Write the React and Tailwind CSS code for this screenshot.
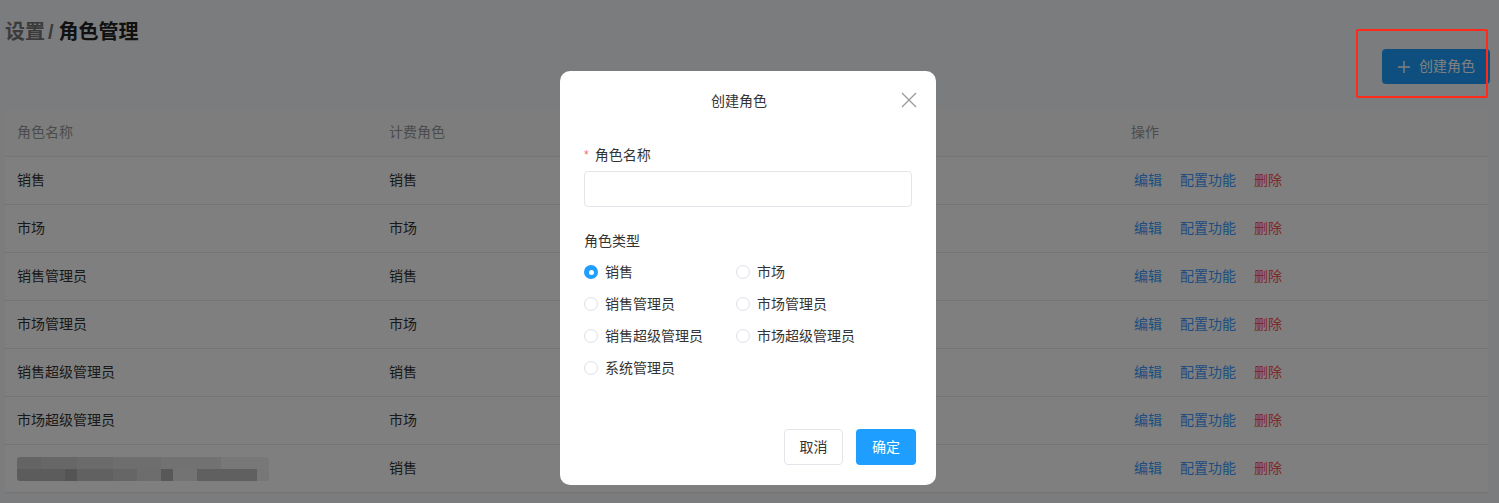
import React from 'react';

const rows = [
  { name: '销售', billing: '销售' },
  { name: '市场', billing: '市场' },
  { name: '销售管理员', billing: '销售' },
  { name: '市场管理员', billing: '市场' },
  { name: '销售超级管理员', billing: '销售' },
  { name: '市场超级管理员', billing: '市场' },
  { name: null, billing: '销售' },
];

const roleTypes = [
  ['销售', '市场'],
  ['销售管理员', '市场管理员'],
  ['销售超级管理员', '市场超级管理员'],
  ['系统管理员'],
];

// pixelated name, as it is blurred in the screenshot
const Mosaic = () => (
  <div className="flex flex-col w-[252px] h-[24px] rounded-[3px] overflow-hidden">
    <div className="flex h-[12px]">
      <div className="w-[24px] bg-[#c9c9c9]" />
      <div className="w-[36px] bg-[#cfcfcf]" />
      <div className="w-[36px] bg-[#d6d6d6]" />
      <div className="w-[48px] bg-[#dddddd]" />
      <div className="w-[60px] bg-[#e4e4e4]" />
      <div className="w-[48px] bg-[#f0f0f0]" />
    </div>
    <div className="flex h-[12px]">
      <div className="w-[48px] bg-[#b9b9b9]" />
      <div className="w-[12px] bg-[#a9a9a9]" />
      <div className="w-[36px] bg-[#c2c2c2]" />
      <div className="w-[24px] bg-[#cdcdcd]" />
      <div className="w-[24px] bg-[#dadada]" />
      <div className="w-[12px] bg-[#b0b0b0]" />
      <div className="w-[24px] bg-[#e6e6e6]" />
      <div className="w-[60px] bg-[#c0c0c0]" />
      <div className="w-[12px] bg-[#eeeeee]" />
    </div>
  </div>
);

const Radio = ({ checked, label }) => (
  <div className="flex items-center w-[152px] h-[32px]">
    {checked ? (
      <span className="w-[14px] h-[14px] rounded-full bg-[#1e9fff] flex items-center justify-center">
        <span className="w-[5px] h-[5px] rounded-full bg-white" />
      </span>
    ) : (
      <span className="w-[14px] h-[14px] rounded-full border border-[#dcdfe6] bg-white" />
    )}
    <span className="ml-[7px] text-[14px] text-[#333]">{label}</span>
  </div>
);

export default function App() {
  return (
    <div
      className="relative min-h-screen bg-[#f6f8fc] pl-[5px] pr-[11px] overflow-hidden"
      style={{ fontFamily: '"Liberation Sans", "Noto Sans CJK SC", sans-serif' }}
    >
      <h1 className="pt-[18px] text-[20px] leading-[28px] font-bold text-[#222] flex">
        <span className="text-[#777]">设置</span>
        <span className="text-[#777] ml-[3px] mr-[5px]">/</span>
        <span>角色管理</span>
      </h1>

      <div className="flex justify-end mt-[3px]">
        <button className="flex items-center h-[35px] pl-[15px] pr-[15px] rounded-[4px] bg-[#1e9fff] text-white text-[14px] mr-[-2px]">
          <svg width="14" height="14" viewBox="0 0 14 14" className="mr-[8px]">
            <path d="M7 1v12M1 7h12" stroke="white" strokeWidth="1.4" fill="none" />
          </svg>
          创建角色
        </button>
      </div>

      <div className="mt-[25px] bg-white text-[14px]">
        <div className="grid grid-cols-[372px_372px_372px_1fr] h-[48px] items-center bg-[#fafafa] border-b border-[#e8e8e8] text-[#999]">
          <div className="pl-[12px]">角色名称</div>
          <div className="pl-[12px]">计费角色</div>
          <div className="pl-[12px]"></div>
          <div className="pl-[10px]">操作</div>
        </div>
        {rows.map((r, i) => (
          <div
            key={i}
            className="grid grid-cols-[372px_372px_372px_1fr] h-[48px] items-center border-b border-[#e8e8e8] text-[#333]"
          >
            <div className="pl-[12px]">{r.name ? r.name : <Mosaic />}</div>
            <div className="pl-[12px]">{r.billing}</div>
            <div className="pl-[12px]"></div>
            <div className="pl-[13px] flex gap-[18px]">
              <span className="text-[#3a9cff]">编辑</span>
              <span className="text-[#3a9cff]">配置功能</span>
              <span className="text-[#ff4d4f]">删除</span>
            </div>
          </div>
        ))}
      </div>

      {/* mask */}
      <div className="fixed inset-0 bg-black/50" />

      {/* annotation box */}
      <div className="absolute left-[1356px] top-[29px] w-[132px] h-[69px] border-[2px] border-[#ff2a1a] rounded-[2px]" />

      {/* dialog */}
      <div className="fixed left-[560px] top-[71px] w-[376px] h-[414px] bg-white rounded-[10px] flex flex-col">
        <div className="relative h-[60px] flex items-center justify-center pr-[18px] text-[14px] text-[#333]">
          创建角色
          <svg width="16" height="16" viewBox="0 0 16 16" className="absolute right-[19px] top-[21px]">
            <path d="M1 1l14 14M15 1L1 15" stroke="#999" strokeWidth="1.3" fill="none" />
          </svg>
        </div>

        <div className="px-[24px] pt-[14px]">
          <div className="flex items-center h-[20px] text-[14px] text-[#333]">
            <span className="text-[#f56c6c] mr-[6px] text-[12px]">*</span>角色名称
          </div>
          <div className="mt-[6px] h-[36px] border border-[#e2e5ea] rounded-[4px]" />

          <div className="mt-[24px] h-[20px] text-[14px] text-[#333] leading-[20px]">角色类型</div>
          <div className="mt-[5px] flex flex-col">
            {roleTypes.map((pair, i) => (
              <div key={i} className="flex">
                {pair.map((label) => (
                  <Radio key={label} label={label} checked={label === '销售' && i === 0} />
                ))}
              </div>
            ))}
          </div>
        </div>

        <div className="mt-auto mb-[20px] mr-[20px] flex justify-end gap-[13px]">
          <button className="w-[59px] h-[36px] border border-[#e2e5ea] rounded-[4px] bg-white text-[14px] text-[#333]">
            取消
          </button>
          <button className="w-[60px] h-[36px] rounded-[4px] bg-[#1e9fff] text-[14px] text-white">
            确定
          </button>
        </div>
      </div>
    </div>
  );
}
